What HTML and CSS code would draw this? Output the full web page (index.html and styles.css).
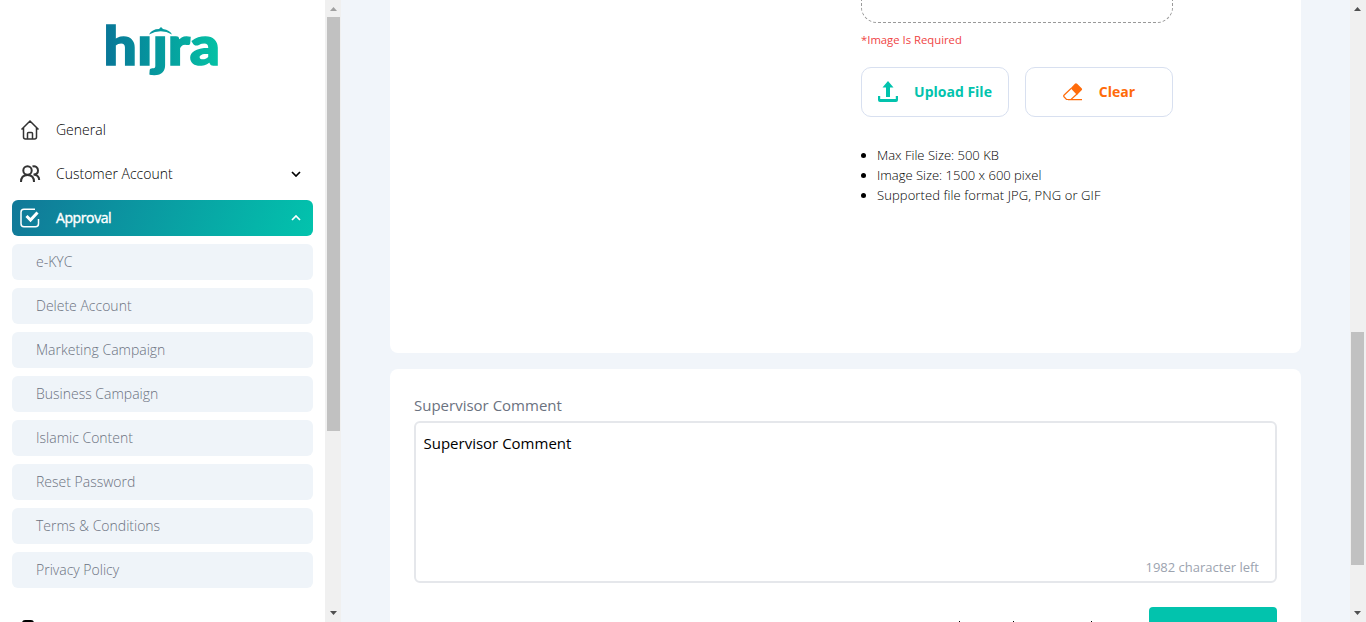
FILE: index.html
```html
<!DOCTYPE html>
<html lang="en">
<head>
<meta charset="utf-8">
<title>Hijra – Approval</title>
<link rel="stylesheet" href="styles.css">
</head>
<body>
<aside class="sidebar">
  <div class="menu">
    <svg class="logo" width="114" height="52" viewBox="0 0 114 52" role="img" aria-label="hijra">
      <defs><linearGradient id="brand" gradientUnits="userSpaceOnUse" x1="0" y1="0" x2="114" y2="0"><stop offset="0" stop-color="#087798"/><stop offset="1" stop-color="#04c2a5"/></linearGradient></defs>
      <text class="wordmark" x="-2.500" y="43" textLength="116.500" lengthAdjust="spacingAndGlyphs" fill="url(#brand)" stroke="url(#brand)">hıȷra</text>
      <path d="M43 12.500Q46 7 53 7L55 5 57 7Q64 8 66 12.500Q55 6 43 12.500Z" fill="url(#brand)"/>
    </svg>
    <nav class="nav">
      <a class="item"><svg class="icon" viewBox="0 0 20 20"><path d="M1.500 9.500 10 1l8.500 8.500M3.500 8v9q0 2 2 2h9q2 0 2-2V8M7.500 18.500v-5q0-1 1-1h3q1 0 1 1v5"/></svg><span class="label">General</span></a>
      <a class="item"><svg class="icon people" viewBox="0 0 20 20"><circle cx="7.500" cy="6.500" r="4.200"/><path d="M1 18q0-7 6.500-7t6.500 7M12.500 2.500c3-1 5.500 1.200 5.500 4s-2 4-4.500 4q5.500.5 5.700 5.500"/></svg><span class="label">Customer Account</span><svg class="chev" viewBox="0 0 10 6"><path d="m1 1 4 4 4-4"/></svg></a>
      <a class="item active"><svg class="icon" viewBox="0 0 20 20"><path d="M15 1.200H4q-3 0-3 3v11.600q0 3 3 3h11.500q3 0 3-3V11"/><path class="tick" d="m6.500 8 4 4 7-7.500"/></svg><span class="label approval">Approval</span><svg class="chev" viewBox="0 0 10 6"><path d="m1 5 4-4 4 4"/></svg></a>
      <a class="sub">e-KYC</a>
      <a class="sub">Delete Account</a>
      <a class="sub">Marketing Campaign</a>
      <a class="sub">Business Campaign</a>
      <a class="sub">Islamic Content</a>
      <a class="sub">Reset Password</a>
      <a class="sub">Terms &amp; Conditions</a>
      <a class="sub">Privacy Policy</a>
      <span class="next-icon"></span>
    </nav>
  </div>
  <div class="scroll side"><svg width="7" height="4" viewBox="0 0 7 4"><path fill="#a0a0a0" d="M0 4 3.500 0 7 4Z"/></svg><i class="thumb"></i><svg class="down" width="7" height="4" viewBox="0 0 7 4"><path d="M0 0h7L3.500 4Z"/></svg></div>
</aside>
<main class="content">
  <section class="card upload-card">
    <div class="upload">
      <div class="drop"></div>
      <p class="error">*Image Is Required</p>
      <div class="buttons">
        <button class="btn up"><svg width="20" height="21" viewBox="0 0 20 21"><path fill="currentColor" d="M10 0 4.500 6.500H8V16h4V6.500h3.500ZM0 15h2.200v3h15.600v-3H20v4q0 2-2 2H2q-2 0-2-2Z"/></svg><span>Upload File</span></button>
        <button class="btn clear"><svg width="20" height="18" viewBox="0 0 20 18"><path d="M8 5.500 1.200 12q-1 1 0 2l2.300 2.500H8l6-5.500M5 16.600h14" fill="none" stroke="currentColor" stroke-width="1.200"/><path fill="currentColor" d="m7.700 5.300 4.200-4.500q1-1 2.200 0l4.500 4.500q1 1 0 2L14 12Z"/></svg><span>Clear</span></button>
      </div>
      <ul class="rules"><li>Max File Size: 500 KB</li><li>Image Size: 1500 x 600 pixel</li><li class="formats">Supported file format JPG, PNG or GIF</li></ul>
    </div>
  </section>
  <section class="card comment-card">
    <div class="caption">Supervisor Comment</div>
    <div class="box"><span class="value">Supervisor Comment</span><span class="count">1982 character left</span></div>
    <div class="actions"><div class="peek"><i></i><i></i><i></i></div><div class="submit"></div></div>
  </section>
</main>
<div class="scroll page"><svg width="7" height="4" viewBox="0 0 7 4"><path d="M0 4 3.500 0 7 4Z"/></svg><i class="thumb"></i><svg class="down" width="7" height="4" viewBox="0 0 7 4"><path d="M0 0h7L3.500 4Z"/></svg></div>
</body>
</html>
```
FILE: styles.css
```css
* { box-sizing: border-box; }
body { margin: 0; width: 1366px; height: 622px; overflow: hidden; display: flex; background: #f1f5fa; font-family: "Open Sans", sans-serif; color: #000; }
span { white-space: nowrap; }
.sidebar { width: 341px; height: 622px; display: flex; background: #fff; flex: none; }
.menu { width: 325px; padding: 22px 12px 0; overflow: hidden; }
.logo { display: block; margin: 0 0 38px 94px; overflow: visible; }
.wordmark { font-family: Lato, sans-serif; font-weight: 900; font-size: 54px; stroke-width: 1.5px; }
.nav { display: flex; flex-direction: column; gap: 8px; }
.item { height: 36px; flex: none; display: flex; align-items: center; padding: 0 12px 0 8px; border-radius: 6px; font-size: 14px; font-weight: 300; }
.label { padding-bottom: 2px; }
.icon { width: 20px; height: 20px; margin-right: 16px; fill: none; stroke: #333; stroke-width: 1.5; overflow: visible; }
.people { stroke-width: 2; }
.chev { width: 10px; height: 6px; margin-left: auto; fill: none; stroke: currentColor; stroke-width: 1.7; }
.active { background: linear-gradient(110deg, #117898, #02c3ad); color: #fff; }
.active .icon { stroke: #fff; }
.active .tick { stroke-width: 3; }
.approval { font-weight: 400; letter-spacing: -.4px; -webkit-text-stroke: .4px #fff; }
.sub { height: 36px; flex: none; display: flex; align-items: center; padding: 0 0 2px 24px; border-radius: 6px; background: #eff4f9; color: #6b7280; font-size: 14px; font-weight: 300; }
.next-icon { width: 12px; height: 8px; flex: none; margin: 24px 0 0 10px; border-radius: 3px; background: #000; }
.scroll { width: 16px; height: 622px; flex: none; display: flex; flex-direction: column; align-items: center; padding: 7px 0; background: #f0f0f0; fill: #505050; }
.scroll svg { flex: none; }
.thumb { width: 13px; background: #c1c1c1; }
.side .thumb { height: 414px; margin-top: 6px; }
.page { padding-right: 1px; }
.page .thumb { height: 233px; margin-top: 321px; }
.down { margin-top: auto; }
.content { width: 1009px; height: 622px; padding-left: 49px; display: flex; flex-direction: column; gap: 16px; overflow: hidden; flex: none; }
.card { width: 911px; background: #fff; flex: none; }
.upload-card { height: 353px; border-radius: 0 0 8px 8px; padding-left: 471px; }
.upload { width: 312px; }
.drop { height: 23px; border: 1px dashed #999; border-top: 0; border-radius: 0 0 16px 16px; }
.error { margin: 9px 0 19px; height: 16px; line-height: 16px; font-size: 11.3px; color: #ef4444; }
.buttons { display: flex; gap: 16px; }
.btn { width: 148px; height: 50px; padding: 0 0 1px; display: flex; align-items: center; justify-content: center; gap: 16px; border: 1px solid #d8e0f0; border-radius: 10px; background: #fff; font: 700 14px "Open Sans", sans-serif; }
.btn span { padding-bottom: 1px; }
.up { color: #02c3ad; }
.clear { color: #ff6b0a; }
.rules { margin: 28px 0 0; padding-left: 16px; font-size: 13px; font-weight: 300; line-height: 20px; }
.formats { letter-spacing: .1px; }
.comment-card { height: 300px; border-radius: 8px 8px 0 0; padding: 24px 24px 0; }
.caption { height: 24px; line-height: 24px; font-size: 15px; color: #6b7280; }
.box { height: 162px; margin-top: 4px; border: 2px solid #e5e7eb; border-radius: 6px; padding: 8px 16px 4px 7.5px; display: flex; flex-direction: column; justify-content: space-between; font-size: 15px; line-height: 24px; }
.count { align-self: flex-end; font-size: 13px; line-height: 20px; color: #9ca3af; }
.actions { display: flex; justify-content: flex-end; margin-top: 24px; }
.peek { display: flex; width: 190px; padding-top: 14px; }
.peek i { width: 1px; height: 4px; background: #000; margin-right: 53px; flex: none; }
.peek i + i { margin-right: 77px; }
.submit { width: 128px; height: 40px; border-radius: 4px; background: #02c3ad; }
```
